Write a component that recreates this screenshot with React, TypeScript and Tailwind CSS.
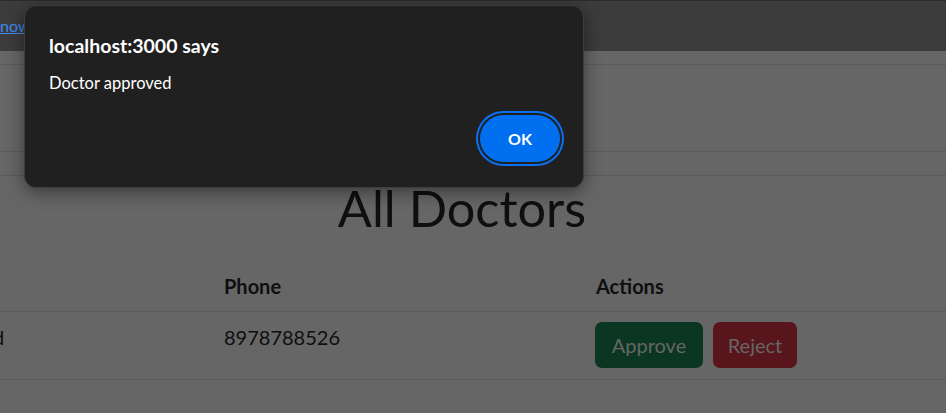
import React from "react";

const lineColor = "border-[#585a5c]";

const doctors = [{ name: "d", phone: "8978788526" }];

const AlertDialog: React.FC = () => (
  <div className="absolute left-[24px] top-[5px] w-[560px] h-[183px] rounded-[12px] bg-[#202020] border border-[#3d3d3d] shadow-[0_4px_18px_rgba(0,0,0,0.45)] pl-[24px] pr-[23px] pt-[28px] flex flex-col">
    <h2 className="text-[19.5px] leading-[24px] font-bold text-white">localhost:3000 says</h2>
    <p className="mt-[15px] text-[16.5px] leading-[20px] text-white">Doctor approved</p>
    <div className="mt-[22px] flex justify-end">
      <button className="w-[80px] h-[47px] rounded-full bg-[#0070f0] text-white text-[16px] font-bold ring-2 ring-[#0a6ff0] ring-offset-2 ring-offset-[#202020]">
        OK
      </button>
    </div>
  </div>
);

export default function App() {
  return (
    <div className="relative min-h-screen overflow-hidden bg-[#666666] font-['Lato',sans-serif] text-[#0d0f10]">
      <div className="h-[51px] bg-[#3c3c3c] border-t border-[#2b2b2b] flex items-center">
        <a className="text-[16px] text-[#3d8cf5] underline leading-none">now</a>
      </div>
      <div className="h-[13px]" />
      <div className={`h-[87px] border-t ${lineColor}`} />
      <div className={`h-[24px] border-t ${lineColor}`} />
      <div className={`border-t ${lineColor}`} />

      <h1 className="mt-[2px] pr-[22px] text-center text-[50.5px] leading-[60px]">All Doctors</h1>

      <div className="mt-[23px] text-[20px]">
        <div className={`flex h-[51px] border-b ${lineColor} font-bold`}>
          <div className="w-[214px]" />
          <div className="w-[372px] pl-[10px] pt-[10px] leading-[30px]">Phone</div>
          <div className="pl-[10px] pt-[10px] leading-[30px]">Actions</div>
        </div>
        {doctors.map((d) => (
          <div key={d.phone} className={`flex h-[68px] border-b ${lineColor}`}>
            <div className="w-[214px] pt-[10px] leading-[30px] overflow-hidden">
              <span className="-ml-[7px] inline-block">{d.name}</span>
            </div>
            <div className="w-[372px] pl-[10px] pt-[10px] leading-[30px]">{d.phone}</div>
            <div className="pl-[9px] pt-[10px] flex gap-[10px]">
              <button className="w-[108px] h-[46px] rounded-[7px] bg-[#0a3622] text-[#666666] text-[20px]">Approve</button>
              <button className="w-[84px] h-[46px] rounded-[7px] bg-[#58151c] text-[#666666] text-[20px]">Reject</button>
            </div>
          </div>
        ))}
      </div>

      <AlertDialog />
    </div>
  );
}
